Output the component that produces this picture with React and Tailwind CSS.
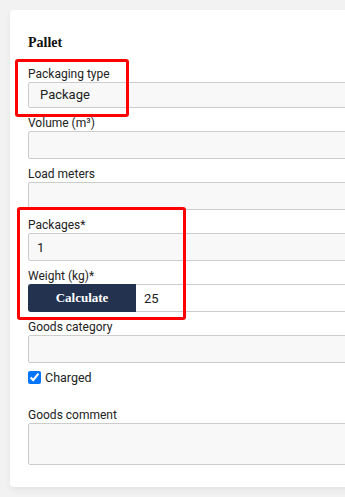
import React from "react";

const labelCls = "block pt-[7px] h-[23px] leading-[16px] text-[12px] text-[#222222]";
const inputCls = "block w-full h-[28px] border border-[#cccccc] bg-[#f8f8f8] rounded-[2px] px-[8px] text-[13px] text-[#222222] outline-none";

function Field({ label, value = "" }) {
  return (
    <div>
      <div className={labelCls}>{label}</div>
      <input className={inputCls} defaultValue={value} readOnly />
    </div>
  );
}

export default function App() {
  return (
    <div
      className="w-[345px] h-[497px] overflow-hidden bg-[#f2f2f2] pt-[10px] pl-[10px]"
      style={{ fontFamily: "Roboto, 'Liberation Sans', sans-serif" }}
    >
      <div className="relative w-[600px] h-[477px] bg-white rounded-[4px] shadow-[0_3px_6px_rgba(0,0,0,0.06)] pl-[18px] pr-[18px] pt-[22px]">
        <div
          className="h-[20px] leading-[20px] text-[14px] font-bold text-[#111111] pt-[1px]"
          style={{ fontFamily: "'Liberation Serif', serif" }}
        >
          Pallet
        </div>
        <div className="h-[7px]" />
        <div>
          <div className={labelCls}>Packaging type</div>
          <div className="flex items-center h-[26px] border border-[#cccccc] bg-[#f8f8f8] rounded-[2px] pl-[11px] text-[13px] text-[#222222]">
            Package
          </div>
        </div>
        <Field label="Volume (m³)" />
        <Field label="Load meters" />
        <Field label="Packages*" value="1" />
        <div>
          <div className={labelCls}>Weight (kg)*</div>
          <div className="flex h-[28px]">
            <button
              className="w-[108px] h-[28px] bg-[#22324f] text-white text-[13px] font-bold rounded-l-[3px] shrink-0"
              style={{ fontFamily: "'Liberation Serif', serif" }}
            >
              Calculate
            </button>
            <input
              className="flex-1 h-[28px] border border-[#cccccc] border-l-0 bg-white px-[8px] text-[13px] text-[#222222] outline-none"
              defaultValue="25"
              readOnly
            />
          </div>
        </div>
        <Field label="Goods category" />
        <div className="flex items-center mt-[8px] h-[13px] gap-[4px]">
          <input type="checkbox" defaultChecked className="m-0 w-[13px] h-[13px] accent-[#0075ff]" />
          <span className="text-[12.5px] leading-[13px] text-[#222222]">Charged</span>
        </div>
        <div className="h-[16px]" />
        <div>
          <div className={labelCls}>Goods comment</div>
          <div className="h-[42px] border border-[#cccccc] bg-[#f8f8f8] rounded-[2px]" />
        </div>

        <div className="absolute left-[5px] top-[49px] w-[114px] h-[58px] border-[3px] border-[#ff0000] rounded-[3px] pointer-events-none" />
        <div className="absolute left-[7px] top-[197px] w-[169px] h-[113px] border-[3px] border-[#ff0000] rounded-[3px] pointer-events-none" />
      </div>
    </div>
  );
}
